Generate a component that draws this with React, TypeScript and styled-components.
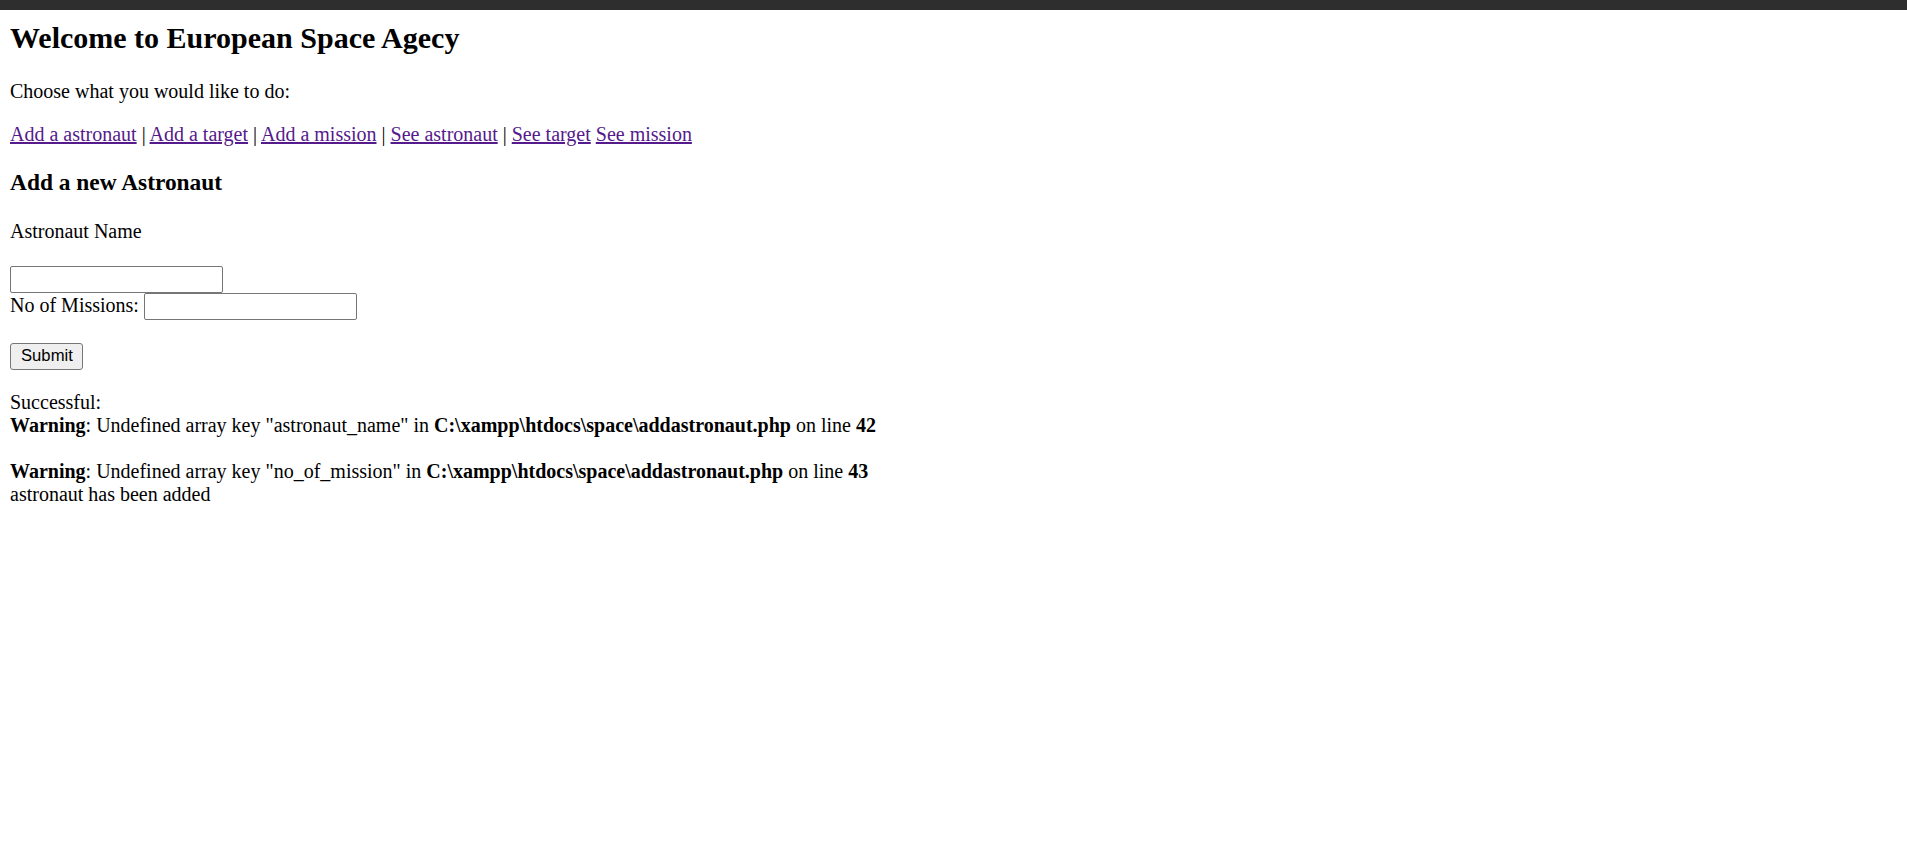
import React from "react";
import styled, { createGlobalStyle } from "styled-components";

const GlobalStyle = createGlobalStyle`
  html, body {
    margin: 0;
    padding: 0;
    background: #ffffff;
  }
  body {
    font-family: "Liberation Serif", "Times New Roman", serif;
    font-size: 20px;
    color: #000000;
  }
`;

const TopBar = styled.div`
  height: 10px;
  background: #2e2e2e;
`;

const Page = styled.div`
  padding: 0 10px;
  display: flow-root;
`;

const Title = styled.h2`
  font-size: 30px;
  font-weight: bold;
  margin: 11px 0 25px;
`;

const Para = styled.p<{ $before?: number; $after?: number }>`
  margin: ${(p) => p.$before ?? 20}px 0 ${(p) => p.$after ?? 20}px;
`;

const NavLink = styled.a`
  color: #551a8b;
  text-decoration: underline;
  cursor: pointer;
`;

const SectionTitle = styled.h3`
  font-size: 23.4px;
  font-weight: bold;
  margin: 23.4px 0;
`;

const Form = styled.form`
  margin: 0;
`;

const TextInput = styled.input<{ $top?: number }>`
  box-sizing: border-box;
  width: 213px;
  height: 27px;
  border: 1px solid #767676;
  border-radius: 2px;
  padding: 1px 3px;
  font-family: "Liberation Sans", Arial, sans-serif;
  font-size: 16.67px;
  background: #ffffff;
  vertical-align: baseline;
  margin: ${(p) => p.$top ?? 0}px 0 0;
`;

const SubmitButton = styled.button`
  box-sizing: border-box;
  height: 27px;
  padding: 1px 9px 1px 10px;
  border: 1px solid #767676;
  border-radius: 3px;
  background: #efefef;
  color: #000000;
  font-family: "Liberation Sans", Arial, sans-serif;
  font-size: 16.67px;
  margin: 0;
`;

const Output = styled.div`
  line-height: normal;
`;

const Strong = styled.b`
  font-weight: bold;
`;

const links: { label: string; sep: string }[] = [
  { label: "Add a astronaut", sep: " | " },
  { label: "Add a target", sep: " | " },
  { label: "Add a mission", sep: " | " },
  { label: "See astronaut", sep: " | " },
  { label: "See target", sep: " " },
  { label: "See mission", sep: "" },
];

export default function App() {
  return (
    <>
      <GlobalStyle />
      <TopBar />
      <Page>
        <Title>Welcome to European Space Agecy</Title>
        <Para>Choose what you would like to do:</Para>
        <Para>
          {links.map((l) => (
            <React.Fragment key={l.label}>
              <NavLink href="#">{l.label}</NavLink>
              {l.sep}
            </React.Fragment>
          ))}
        </Para>
        <SectionTitle>Add a new Astronaut</SectionTitle>
        <Form onSubmit={(e) => e.preventDefault()}>
          <Para>Astronaut Name</Para>
          <TextInput type="text" name="astronaut_name" $top={3} />
          <br />
          No of Missions: <TextInput type="text" name="no_of_mission" />
          <Para $before={23} $after={21}>
            <SubmitButton type="submit">Submit</SubmitButton>
          </Para>
        </Form>
        <Output>
          Successful:
          <br />
          <Strong>Warning</Strong>: Undefined array key "astronaut_name" in{" "}
          <Strong>C:\xampp\htdocs\space\addastronaut.php</Strong> on line{" "}
          <Strong>42</Strong>
          <br />
          <br />
          <Strong>Warning</Strong>: Undefined array key "no_of_mission" in{" "}
          <Strong>C:\xampp\htdocs\space\addastronaut.php</Strong> on line{" "}
          <Strong>43</Strong>
          <br />
          astronaut has been added
        </Output>
      </Page>
    </>
  );
}
